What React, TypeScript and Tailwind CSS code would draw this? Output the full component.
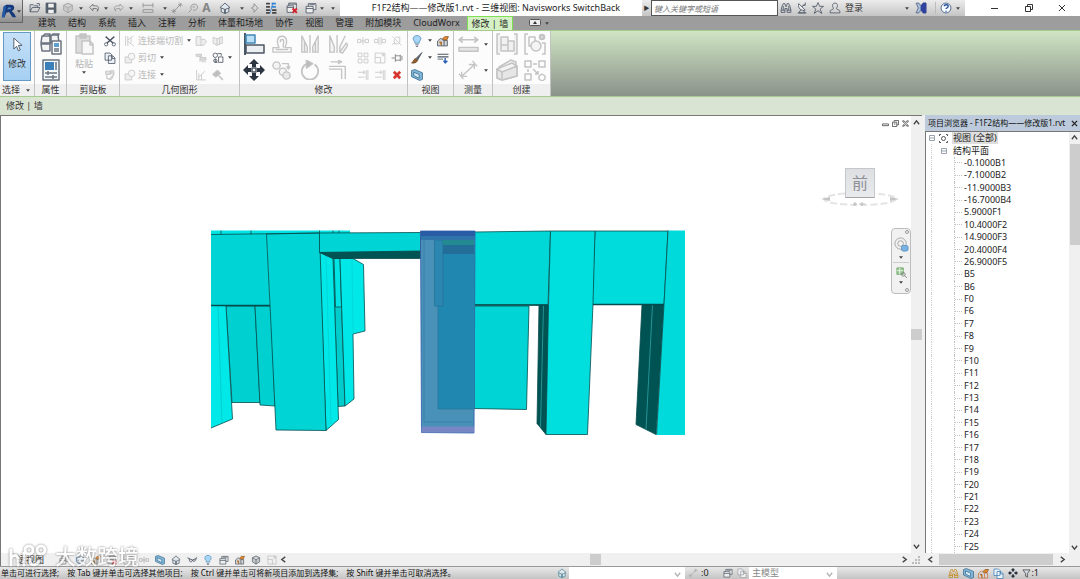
import { useState } from "react";
import type { ReactNode } from "react";

// all glyphs are drawn on a 22x22 grid and take the colour of the button
const icons: Record<string, ReactNode> = {
  open: <path d="M2 18V5h6l2 2h6v3M2 18l4-8h14l-4 8H2zM14 3h5v4" />,
  save: (
    <>
      <path d="M2 2h18v18H2z" fill="#555e6b" />
      <path d="M6 3h10v7H6zM6 14h10v6H6z" fill="#f1f1f1" stroke="none" />
    </>
  ),
  cube: <path d="M11 2l8 4v9l-8 5-8-5V6zM3 6l8 4 8-4M11 10v10" fill="#c9c9c9" />,
  undo: <path d="M9 4L3 10l6 6v-4h6c2 0 3 1 2 5 5-7 1-10-3-10H9z" />,
  redo: <path d="M13 4l6 6-6 6v-4H7c-2 0-3 1-2 5-5-7-1-10 3-10h5z" />,
  glasses: <path d="M1 6l4 2c0 9 6 9 7 3 2 5 7 3 8-3l1-3M5 8l7 3 8-3" strokeWidth="2" />,
  dim: <path d="M2 6h18M2 2v8M20 2v8M2 14h18v5H2z" />,
  diag: <path d="M3 19L19 3M1 15l6 6M15 1l6 6M5 13v4h4M17 9V5h-4" />,
  tag: <path d="M3 19l5-5M8 14C4 6 12 2 17 5s2 11-6 10M10 9h5" />,
  home: (
    <>
      <path d="M2 10l9-8 9 8-9 4zM4 11v7l7 3 7-3v-7" fill="#dfe7ee" />
      <path d="M11 14v7" strokeWidth="3" />
    </>
  ),
  section: <path d="M11 3l7 8-7 8M11 3v5L6 11l5 3v5" />,
  lines: (
    <>
      <path d="M2 3h7M2 9h7M2 15h7M2 20h7M13 20h8M13 15h8" strokeWidth="3" />
      <path d="M12 3h8M12 9h8" stroke="#3485d4" strokeWidth="3" />
      <path d="M15 1L9 21" stroke="#3485d4" />
    </>
  ),
  closeWin: (
    <>
      <path d="M5 7V2h14v12M2 7h12v12H2zM5 4h14M2 10h12" fill="#eee" />
      <path d="M12 12l8 8M20 12l-8 8" stroke="#d5232d" strokeWidth="3.500" />
    </>
  ),
  switchWin: <path d="M2 8h13v12H2zM6 8V3h14v11h-5M2 12h13M8 5h10" fill="#eee" />,
  binoculars: (
    <>
      <path d="M4 7l2-4h3l1 5h2l1-5h3l2 4 2 8v4h-7v-7h-4v7H2v-4z" />
      <path d="M2 15h7M13 15h7M6 7v8M16 7v8" />
    </>
  ),
  dish: (
    <>
      <path d="M5 3c-2 8 4 14 12 12z" fill="#f1f1f1" />
      <path d="M11 9l5-5M17 1v5h-5M9 14l-4 6h12l-4-5M3 20h16" />
    </>
  ),
  star: <path d="M11 1l3 7h7l-6 5 3 8-7-5-7 5 3-8-6-5h7z" />,
  user: <path d="M11 2c5 0 5 5 4 7s-2 4 1 5 4 1 4 6H2c0-5 1-5 4-6s2-3 1-5-1-7 4-7z" />,
  exchange: (
    <>
      <path d="M2 2h5l4 5 4-5h5v18h-5l-4-5-4 5H2l4-9z" fill="#a9bfdc" />
      <path d="M11 8l4-6h5v18h-5l-4-6z" fill="#30429d" stroke="#30429d" />
    </>
  ),
  help: (
    <>
      <circle cx="11" cy="11" r="9" fill="#f7faff" stroke="#35547f" />
      <path d="M8 8c0-4 7-4 7 0 0 3-4 3-4 5M11 16v2" stroke="#2450a0" strokeWidth="2.500" />
    </>
  ),
  props: (
    <>
      <path d="M2 3h8v7H1zM11 2h7l1 8h-8zM1 11h9v7H2z" fill="#f3f3f3" />
      <path d="M3 3l2-2h5l-1 2M12 2l1-1h6l-1 2" />
      <path d="M12 8h9v13h-9z" fill="#fff" />
      <path d="M14 10h5v4h-5z" fill="#5c9fd0" stroke="none" />
      <path d="M14 16h5M14 18h5" />
    </>
  ),
  typeProps: (
    <>
      <path d="M3 1h16v20H3z" fill="#f5f8fb" />
      <path d="M5 3h9v8H5z" fill="#3b80b8" stroke="none" />
      <path d="M16 3v8M5 14h12M8 12v4M5 18h12M13 16v4" />
    </>
  ),
  paste: (
    <>
      <path d="M3 3h14v17H3z" fill="#dcdcdc" />
      <path d="M7 1h6v4H7z" fill="#c4c4c4" />
      <path d="M9 8h8l3 3v10H9zM17 8v4h3" fill="#f8f8f8" />
    </>
  ),
  cut: (
    <>
      <path d="M3 3l14 12M19 3L5 15" strokeWidth="2.500" />
      <circle cx="4" cy="17" r="3" />
      <circle cx="18" cy="17" r="3" />
    </>
  ),
  copy: <path d="M2 2h9l3 3v10H2zM8 7h8l4 4v10H8zM15 7v5h5" fill="#eef3f8" />,
  match: <path d="M3 4h9v6H3zM12 3h6v5h-6zM5 10v8h5l9-10-5 11H8" fill="#ddd" />,
  cope: <path d="M3 2v18M7 2v18M7 9l10-7M7 12l11 8M13 6v8" />,
  cutGeo: (
    <>
      <path d="M2 9h12v11H2z" fill="#eee" />
      <circle cx="14" cy="8" r="6" fill="#f6f6f6" />
    </>
  ),
  joinRoof: <path d="M2 3h9v5h7l3 4-5 7H2zM11 8v11" fill="#eee" />,
  splitFace: <path d="M2 4l7 3v12l-7-4zM9 7l10-4v12L9 19M14 5v12" fill="#eee" />,
  beam: <path d="M2 4h10v4H2zM9 8v10M9 10h11v5H9M12 18h8" fill="#ddd" />,
  paint: (
    <>
      <circle cx="6" cy="6" r="4" />
      <path d="M12 9h8v10h-8zM10 3h7v4M6 12v7h4" />
      <circle cx="6" cy="16" r="3" />
    </>
  ),
  wallJoin: <path d="M3 2v18h17M7 15L18 4M7 8v12M12 11v9" />,
  hammer: <path d="M2 10l8-7 5 5-8 6zM11 11l9 9" fill="#bbb" strokeWidth="3" />,
  align: (
    <>
      <path d="M2 0v22" strokeWidth="2" />
      <path d="M3 2h9v8H3z" fill="#b9def6" stroke="#4186b5" />
      <path d="M3 12h18v8H3z" fill="#eceff2" />
    </>
  ),
  offset: <path d="M1 20h20v-5h-6c-2 0 2-3 1-8-1-6-9-6-10 0-1 5 3 8 1 8H1zM4 17h14M9 9c0-4 4-4 4 0 0 2-2 3 0 6" />,
  mirror: <path d="M11 1v20M2 2l6 12v6H2zM20 2l-6 12v6h6zM5 8v12M17 8v12" fill="#f4f4f4" />,
  mirrorDraw: <path d="M10 1v20M2 2l5 12v6H2zM19 2l-6 12v6M13 20l7-10 2 2-6 9z" fill="#f4f4f4" />,
  move: (
    <>
      <path d="M11 0l5 5h-3v3H9V5H6zM11 22l-5-5h3v-3h4v3h3zM0 11l5-5v3h3v4H5v3zM22 11l-5 5v-3h-3V9h3V6z" fill="#2b3441" stroke="none" />
      <path d="M9 9h4v4H9z" fill="#fff" />
    </>
  ),
  copyObj: (
    <>
      <circle cx="5" cy="6" r="4" fill="#f4f4f4" />
      <circle cx="12" cy="13" r="4" fill="#f4f4f4" />
      <circle cx="16" cy="17" r="4" fill="#eaeaea" />
      <path d="M11 4h7v5M16 7l2 3 2-3" />
    </>
  ),
  rotate: (
    <>
      <path d="M8 4a9 9 0 1 0 8 1" strokeWidth="2" />
      <path d="M7 0l7 4-7 5z" fill="#bbb" />
    </>
  ),
  trim: <path d="M1 7h18v14M1 10h14v11M3 2h11M11 0l4 2-4 2" />,
  split: <path d="M1 8h6v6H1zM15 8h6v6h-6zM11 4v14M7 11h8" />,
  splitGap: <path d="M1 8h6v6H1zM15 8h6v6h-6zM9 4v14M13 4v14" />,
  unpin: <path d="M3 3l16 16M8 4h8v10M6 8v8h8M2 18l4-4" />,
  array: <path d="M2 2h7v7H2zM13 2h7v7h-7zM2 13h7v7H2zM13 13h7v7h-7z" />,
  scale: <path d="M2 2h18v18H2zM2 10h10v10M14 8l4-4M14 4h4v4" />,
  pin: <path d="M1 11h7M8 4v14M8 7h9M8 15h9M17 5v12M20 7v8" />,
  extend: <path d="M2 6h12M2 15h12M17 2v18M11 3l4 3-4 3M20 2v18" />,
  del: <path d="M4 4l14 14M18 4L4 18" stroke="#d6362d" strokeWidth="6" />,
  bulb: (
    <>
      <path d="M11 1c8 0 9 8 4 11v3H7v-3C2 9 3 1 11 1z" fill="#a9d6f5" stroke="#538fbd" />
      <path d="M8 18h6M9 21h4" />
    </>
  ),
  house: (
    <>
      <path d="M1 11l6-5 6 5v9H1zM13 10h6v10h-6" fill="#d4d4d4" />
      <path d="M4 13h4v7M10 7l4-4h7l-3 6h-5z" fill="#e48a2e" stroke="#8a5a2a" />
    </>
  ),
  brush: (
    <>
      <path d="M20 1L9 12l3 3z" fill="#666" />
      <path d="M8 12l4 4c-2 4-7 5-11 4 4-2 3-6 7-8z" fill="#93602d" stroke="#6b4520" />
    </>
  ),
  thin: (
    <>
      <path d="M1 4h20M1 9h20" strokeWidth="2" />
      <path d="M1 13h10" />
      <path d="M15 11v8M12 16l3 4 4-4" stroke="#2b61b5" strokeWidth="2.500" />
    </>
  ),
  box: (
    <>
      <path d="M1 3l6-2 14 6v12l-5 2L1 14z" fill="#7fb6d8" stroke="#3c6c8d" />
      <path d="M5 6l10 4v7L5 12z" fill="#d6ebf8" stroke="#3c6c8d" />
    </>
  ),
  measure: <path d="M1 6h20M5 3L1 6l4 3M17 3l4 3-4 3M1 14h20v4H1z" fill="#e4e4e4" />,
  measureDiag: <path d="M3 19L19 4M1 15l5 6M16 1l5 6M4 13v5h6M18 10V5h-6" />,
  group: <path d="M4 1H1v20h3M18 1h3v20h-3M5 4h7v8H5zM12 8h6v10h-6zM5 12h7v6H5z" fill="#f1f1f1" />,
  similar: (
    <>
      <path d="M4 1H1v20h3M18 10h3v11h-3M5 4h6v9H5z" />
      <circle cx="12" cy="13" r="5" fill="#f4f4f4" />
      <circle cx="18" cy="4" r="2" strokeWidth="2.500" />
    </>
  ),
  parts: (
    <>
      <path d="M3 8L15 1l5 2v9l-5 3z" fill="#f1f1f1" />
      <path d="M1 10l15-6 5 3v10L6 21l-5-2z" fill="#f4f4f4" />
      <path d="M1 10l5 3 15-6v10L6 21l-5-2z" fill="#e6e6e6" />
      <path d="M6 13v8" />
    </>
  ),
  assembly: <path d="M1 2h6v6H1zM15 2h6v6h-6zM1 15h6v6H1zM9 5h4M4 10v3M9 10l5 5M11 15h3v-3M15 17l3-2 3 2v3l-3 2-3-2z" />,
};

type IconProps = { name: string; size?: string; tone?: string };

function Icon({ name, size = "size-3", tone = "text-[#c4c4c4]" }: IconProps) {
  return (
    <svg viewBox="0 0 22 22" className={`${size} ${tone} shrink-0`} fill="none" stroke="currentColor" strokeWidth="1.5" strokeLinejoin="round">
      {icons[name]}
    </svg>
  );
}

function Tool({ name, label, size, tone, className = "" }: IconProps & { label: string; className?: string }) {
  return (
    <button aria-label={label} className={`flex items-center justify-center shrink-0 ${className}`}>
      <Icon name={name} size={size} tone={tone} />
    </button>
  );
}

function Caret({ className = "w-2" }: { className?: string }) {
  return (
    <span className={`flex items-center justify-center shrink-0 ${className}`}>
      <svg viewBox="0 0 6 4" className="w-[4px] h-[3px] text-[#444]">
        <path d="M0 0h6L3 4z" fill="currentColor" />
      </svg>
    </span>
  );
}

function Chevron({ turn = "" }: { turn?: string }) {
  return (
    <svg viewBox="0 0 8 8" className={`size-[7px] ${turn}`} fill="none" stroke="#444" strokeWidth="1.5">
      <path d="M1 6l3-4 3 4" />
    </svg>
  );
}

function Panel({ title, width, children }: { title: ReactNode; width: string; children: ReactNode }) {
  return (
    <section className={`flex flex-col shrink-0 border-r border-[#c3c3c3] ${width}`}>
      <div className="flex-1 bg-[#fcfcfc] flex">{children}</div>
      <h2 className="h-3 bg-[#efefef] flex items-center justify-center gap-1 whitespace-nowrap">{title}</h2>
    </section>
  );
}

const dark = "text-[#4b5563]";

const quick: { name: string; label: string; width: string; tone: string; menu?: boolean }[] = [
  { name: "open", label: "打开", width: "w-4", tone: dark },
  { name: "save", label: "保存", width: "w-4", tone: dark },
  { name: "cube", label: "同步", width: "w-[18px]", tone: "text-[#a0a0a0]", menu: true },
  { name: "undo", label: "放弃", width: "w-[17px]", tone: "text-[#666]", menu: true },
  { name: "redo", label: "重做", width: "w-[17px]", tone: "text-[#999]", menu: true },
  { name: "dim", label: "测量", width: "w-[26px]", tone: "text-[#8c8c8c]", menu: true },
  { name: "diag", label: "对齐标注", width: "w-4", tone: "text-[#8c8c8c]" },
  { name: "tag", label: "标记", width: "w-4", tone: "text-[#8c8c8c]" },
];

const tabs = ["建筑", "结构", "系统", "插入", "注释", "分析", "体量和场地", "协作", "视图", "管理", "附加模块", "CloudWorx"];

function TitleBar() {
  return (
    <div className="flex h-4 bg-linear-to-b from-[#ececec] to-[#c5c5c5]">
      <nav aria-label="快速访问工具栏" className="flex items-center w-[317px] pl-1 shrink-0">
        {quick.map((q) => (
          <span key={q.name} className="flex">
            <Tool name={q.name} label={q.label} tone={q.tone} className={q.width} />
            {q.menu && <Caret />}
          </span>
        ))}
        <button aria-label="文字" className="w-5 text-[12px] leading-4 font-bold text-[#858585]">A</button>
        <Tool name="home" label="三维视图" tone={dark} className="w-[26px]" />
        <Caret />
        <Tool name="section" label="剖面" tone="text-[#888]" className="w-4" />
        <Tool name="lines" label="细线" tone="text-[#444]" className="w-[18px]" />
        <Tool name="closeWin" label="关闭隐藏窗口" tone={dark} className="w-6" />
        <Tool name="switchWin" label="切换窗口" tone={dark} className="w-[14px]" />
        <Caret />
        <Caret className="w-[14px]" />
      </nav>
      <h1 className="flex-1 bg-white text-[9px] leading-4 pl-[10px] text-center whitespace-nowrap text-[#222]">
        F1F2结构——修改版1.rvt - 三维视图: Navisworks SwitchBack
      </h1>
      <span className="flex items-center justify-center w-[9px] text-[6px]">▶</span>
      <input
        aria-label="搜索"
        placeholder="键入关键字或短语"
        className="w-[127px] h-4 bg-white border border-[#555] px-[2px] text-[8px] italic placeholder:text-[#777] outline-none"
      />
      <div className="flex items-center w-[187px] gap-1 pl-[2px] shrink-0">
        <Tool name="binoculars" label="查找" tone={dark} />
        <Tool name="dish" label="通讯中心" tone={dark} />
        <Tool name="star" label="收藏夹" tone={dark} />
        <Tool name="user" label="用户" tone={dark} className="ml-px" />
        <button className="w-[66px] text-left flex items-center justify-between">
          登录 <Caret />
        </button>
        <Tool name="exchange" label="Exchange" tone="text-[#51657f]" />
        <span className="w-px h-3 bg-[#bbb] ml-1" />
        <Tool name="help" label="帮助" />
        <Caret className="w-1" />
      </div>
      <div className="flex justify-between items-center w-[115px] pl-[26px] pr-[14px] bg-white shrink-0 text-[#333]">
        <button aria-label="最小化">
          <svg viewBox="0 0 8 8" className="size-2" stroke="currentColor" fill="none"><path d="M0 4.500h7" /></svg>
        </button>
        <button aria-label="还原">
          <svg viewBox="0 0 8 8" className="size-2" stroke="currentColor" fill="none"><path d="M.5 2.500h5v5h-5zM2.500 2.500v-2h5v5h-2" /></svg>
        </button>
        <button aria-label="关闭">
          <svg viewBox="0 0 8 8" className="size-2" stroke="currentColor" fill="none"><path d="M1 1l6 6M7 1L1 7" /></svg>
        </button>
      </div>
    </div>
  );
}

function Header() {
  return (
    <header className="flex bg-[#9d9d9d] h-[30px] shrink-0">
      <button aria-label="应用程序菜单" className="w-[23px] h-[23px] bg-linear-to-b from-[#d8d8d8] to-[#8f8f8f] border-r border-b border-[#666] flex items-center justify-center shrink-0">
        <svg viewBox="0 0 18 18" className="w-4 h-[18px]">
          <path d="M3 4l3-2h5c5 0 5 6 1 7l3 3 2 4h-4l-4-6-3 1-2 5H1z" fill="#153a7c" />
          <path d="M8 5h2c2 0 1 2 0 2H7z" fill="#5b86c4" />
          <path d="M3 4l3-2-2 14H1z" fill="#2459a5" />
        </svg>
        <Caret className="w-1" />
      </button>
      <div className="flex-1 min-w-0">
        <TitleBar />
        <nav aria-label="功能区" className="flex h-[14px] pl-[9px] whitespace-nowrap text-[#222]">
          {tabs.map((t) => (
            <button key={t} className="px-[6px] leading-[14px]">{t}</button>
          ))}
          <button className="w-[46px] ml-px bg-[#d4f0c4] border-x border-t border-[#7fe054] text-center leading-[13px]">修改 | 墙</button>
          <button aria-label="最小化功能区" className="flex items-center gap-1 ml-4">
            <svg viewBox="0 0 12 8" className="w-3 h-2"><rect x=".5" y=".5" width="11" height="6" rx="1" fill="#eee" stroke="#555" /><path d="M4 5l2-3 2 3z" fill="#333" /></svg>
            <Caret className="w-1" />
          </button>
        </nav>
      </div>
    </header>
  );
}

const small = "h-[17px] w-[17px]";
const big = "h-[26px] w-7";

function Ribbon() {
  return (
    <div className="flex h-[67px] shrink-0 border-y border-[#a5cb8e] bg-linear-to-b from-[#cfe5c3] to-[#8b938a]">
      <Panel title={<>选择 <Caret /></>} width="w-[35px]">
        <button className="mx-[3px] mt-px mb-[3px] flex-1 flex flex-col items-center gap-[6px] pt-1 bg-linear-to-b from-[#c6e1f8] to-[#a5cff2] border border-[#6699c4]">
          <svg viewBox="0 0 12 16" className="w-[11px] h-[15px]"><path d="M2 1v12l3-3 2 5 2-1-2-5h4z" fill="#fff" stroke="#4b5563" /></svg>
          修改
        </button>
      </Panel>
      <Panel title="属性" width="w-8">
        <div className="flex-1 flex flex-col items-center">
          <Tool name="props" label="属性" size="size-[22px]" tone="text-[#6b7480]" className={big} />
          <Tool name="typeProps" label="类型属性" size="size-[22px]" tone="text-[#6b7480]" className={big} />
        </div>
      </Panel>
      <Panel title="剪贴板" width="w-[53px]">
        <button className="w-[34px] pt-[2px] flex flex-col items-center text-[#b4b4b4]">
          <Icon name="paste" size="size-[22px]" />
          <span className="mt-[3px]">粘贴</span>
          <Caret className="h-1" />
        </button>
        <div className="flex flex-col pt-px">
          <Tool name="cut" label="剪切" tone={dark} className={small} />
          <Tool name="copy" label="复制" tone={dark} className={small} />
          <Tool name="match" label="匹配类型" className={small} />
        </div>
      </Panel>
      <Panel title="几何图形" width="w-[120px]">
        <div className="flex flex-col w-[72px] pl-1 pt-px text-[#b8b8b8]">
          {[["cope", "连接端切割"], ["cutGeo", "剪切"], ["cutGeo", "连接"]].map(([icon, text]) => (
            <button key={text} className="flex items-center h-[17px] gap-[2px] whitespace-nowrap">
              <Icon name={icon} /> {text} <Caret />
            </button>
          ))}
        </div>
        <div className="grid grid-cols-[17px_17px] content-start pt-px">
          <Tool name="joinRoof" label="连接屋顶" className={small} />
          <Tool name="splitFace" label="拆分面" className={small} />
          <Tool name="beam" label="梁连接" className={small} />
          <Tool name="paint" label="填色" tone={dark} className={small} />
          <Tool name="wallJoin" label="墙连接" className={small} />
          <Tool name="hammer" label="拆除" className={small} />
        </div>
        <Caret className="w-2 h-[52px]" />
      </Panel>
      <Panel title="修改" width="w-[168px]">
        <div className="grid grid-cols-[28px_28px_28px_28px] content-start">
          <Tool name="align" label="对齐" size="size-[22px]" tone={dark} className={big} />
          <Tool name="offset" label="偏移" size="size-5" className={big} />
          <Tool name="mirror" label="镜像 - 拾取轴" size="size-5" className={big} />
          <Tool name="mirrorDraw" label="镜像 - 绘制轴" size="size-5" className={big} />
          <Tool name="move" label="移动" size="size-[22px]" tone={dark} className={big} />
          <Tool name="copyObj" label="复制图元" size="size-5" className={big} />
          <Tool name="rotate" label="旋转" size="size-5" className={big} />
          <Tool name="trim" label="修剪" size="size-5" className={big} />
        </div>
        <div className="grid grid-cols-[17px_17px_17px] content-start pt-px pl-[2px]">
          <Tool name="split" label="拆分图元" className={small} />
          <Tool name="splitGap" label="用间隙拆分" className={small} />
          <Tool name="unpin" label="解锁" className={small} />
          <Tool name="array" label="阵列" className={small} />
          <Tool name="scale" label="缩放" className={small} />
          <Tool name="pin" label="锁定" tone="text-[#777]" className={small} />
          <Tool name="extend" label="修剪单个" className={small} />
          <Tool name="extend" label="修剪多个" className={small} />
          <Tool name="del" label="删除" size="size-[10px]" className={small} />
        </div>
      </Panel>
      <Panel title="视图" width="w-[46px]">
        <div className="grid grid-cols-[18px_8px_17px] content-start pt-px">
          <Tool name="bulb" label="隐藏" tone={dark} className={small} />
          <Caret />
          <Tool name="house" label="置换" tone={dark} className={small} />
          <Tool name="brush" label="替换" tone={dark} className={small} />
          <Caret />
          <Tool name="thin" label="线处理" tone={dark} className={small} />
          <Tool name="box" label="选择框" className={small} />
        </div>
      </Panel>
      <Panel title="测量" width="w-[39px]">
        <div className="grid grid-cols-[28px_8px] content-start">
          <Tool name="measure" label="测量距离" size="size-[21px]" className={big} />
          <Caret />
          <Tool name="measureDiag" label="对齐尺寸标注" size="size-5" className={big} />
          <Caret />
        </div>
      </Panel>
      <Panel title="创建" width="w-[58px]">
        <div className="grid grid-cols-[28px_28px] content-start">
          <Tool name="group" label="创建组" size="size-[22px]" className={big} />
          <Tool name="similar" label="创建类似" size="size-[22px]" className={big} />
          <Tool name="parts" label="创建部件" size="size-[22px]" className={big} />
          <Tool name="assembly" label="创建部件集" size="size-[22px]" className={big} />
        </div>
      </Panel>
    </div>
  );
}

function Building() {
  return (
    <svg viewBox="208 228 480 210" className="w-[480px] h-[210px]" stroke="#064c4e" strokeWidth=".8">
      {/* left block */}
      <path d="M211 230.500h139v4H211z" fill="#00e4e4" stroke="none" />
      <path d="M226 306h29l5 96.500h-28z" fill="#00d0d0" />
      <path d="M255 306h16l4 100-15-1z" fill="#00d0d0" />
      <path d="M211 306h15l6.500 113-21.500 9z" fill="#00e8e8" stroke="none" />
      <path d="M226 306l6.500 113-21.500 9" fill="none" />
      <path d="M218 306l4 117" stroke="#00c6c8" />
      <path d="M211 234h56l3 71h-59z" fill="#00d4d4" stroke="none" />
      <path d="M211 305.500h59" strokeWidth="1.500" />
      <path d="M333 258.500h7l5 147.500-7 .5z" fill="#00cccc" />
      <path d="M334 258.500h6l1.500 48.500h-6z" fill="#00e4e4" />
      <path d="M340 258.500h13l10.500 6L365 331l-12 3 1 65-9 7z" fill="#00e8e8" />
      <path d="M352 259l1 75" stroke="#00d6d8" />
      <path d="M319.500 252l13.500 6.500 5.500 161-12.500 11z" fill="#00e8e8" />
      <path d="M326 256l5 168" stroke="#00d2d4" />
      <path d="M266.500 234l53-1L326 430.500 276 430l-6-125z" fill="#00d4d4" />
      <path d="M211 234.500l109-1.500M221 230.500v4M251 230.500v4M319.500 230.500v3M333 230.500v3M339 230.500v3" />
      <path d="M319.500 233l101-.5v19.500l-101 .5z" fill="#00d4d4" />
      <path d="M319.500 252.500l101-1.500v7.500H333z" fill="#005353" />
      {/* right block */}
      <path d="M474 306h55l-2.500 103.500-52.500-1z" fill="#00d4d4" />
      <path d="M539 305h10l-3 129.500-9-11z" fill="#005353" />
      <path d="M543.500 305l-3 122" stroke="#2fa3a4" />
      <path d="M642 305h22l-8 129.500-20-10z" fill="#005353" />
      <path d="M652.500 305L646 429" stroke="#2fa3a4" />
      <path d="M474 232l76.500-1-2.500 74h-74z" fill="#00d8d8" />
      <path d="M595 231h73l-4 73.500h-72z" fill="#00dcdc" />
      <path d="M474 305h74M592 304.500h72" strokeWidth="1.500" />
      <path d="M550.500 231H595l-2 73-5.500 130.500H546l2.500-130z" fill="#00dede" />
      <path d="M668 230.500h17V435h-28.500l7.500-131z" fill="#00dada" stroke="none" />
      <path d="M668 230.500l-4 74-7.500 130" fill="none" />
      {/* selected wall */}
      <path d="M420.500 231H475l-1 202-52.500-.5z" fill="#4a91b8" stroke="#3159a8" />
      <path d="M438 245h36.500v164H438z" fill="#2088b0" stroke="#27799f" />
      <path d="M434.500 240h8.500v66h-8.500z" fill="#2b86b0" stroke="#27729a" />
      <path d="M443 240h31v5h-31z" fill="#248a91" stroke="none" />
      <path d="M443 245h31v9h-31z" fill="#236e98" stroke="none" />
      <path d="M421 231h54v5h-54z" fill="#285ca4" stroke="none" />
      <path d="M421 236h54v4h-54z" fill="#2f74ab" stroke="none" />
      <path d="M421.500 426.500H474v6h-52.500z" fill="#7787c6" stroke="none" />
      <path d="M424 238v184h48" stroke="#367da8" fill="none" />
    </svg>
  );
}

function Canvas() {
  return (
    <div className="relative flex-1 min-w-0 min-h-0 overflow-hidden bg-white">
      <div className="pt-[112px] pl-[207px]">
        <Building />
      </div>
      <div className="absolute right-[2px] top-1 flex gap-[3px] text-[#555]">
        <button aria-label="最小化视图"><svg viewBox="0 0 8 8" className="size-[7px]" fill="none" stroke="currentColor"><path d="M.5 4.500h7v2h-7z" /></svg></button>
        <button aria-label="还原视图"><svg viewBox="0 0 8 8" className="size-[7px]" fill="none" stroke="currentColor"><path d="M.5 2.500h5v5h-5zM2.500 2v-1.500h5v5h-2M2 4.500h2" /></svg></button>
        <button aria-label="关闭视图"><svg viewBox="0 0 8 8" className="size-[7px]" fill="none" stroke="currentColor"><path d="M.5 1h2L4 3l1.500-2h2L5 4l2.500 3h-2L4 5 2.500 7h-2L3 4z" /></svg></button>
      </div>
      <div className="absolute right-[11px] top-[52px] w-20 flex flex-col items-center">
        <svg viewBox="0 0 80 18" className="absolute top-[22px] w-20 h-[18px]" fill="none" stroke="#b9b9b9">
          <ellipse cx="40" cy="9" rx="36" ry="6" strokeWidth="2" strokeDasharray="7 3" stroke="#e4e4e4" />
          <path d="M1 9l9-2v4zM79 9l-9-2v4z" fill="#c4c4c4" stroke="none" />
          <path d="M33 14h4M35 12v4M39 14h6M42 12v4" />
        </svg>
        <button className="relative size-[30px] bg-linear-to-b from-[#dedfe2] to-[#e9eaec] border border-[#c6c7ca] border-b-[#a5a5a5] text-[16px] leading-7 text-[#8d9096]">前</button>
      </div>
      <div className="absolute right-0 top-[112px] w-5 h-[66px] rounded-sm border border-[#bdbdbd] bg-[#f1f1f1] flex flex-col items-center justify-between py-px">
        <span className="self-end size-1 mr-px rounded-full border border-[#999]" />
        <button aria-label="控制盘">
          <svg viewBox="0 0 16 16" className="size-[15px]" fill="none" stroke="#a3a3a3">
            <circle cx="7" cy="7" r="6" /><circle cx="7" cy="7" r="3" />
            <rect x="8" y="9" width="7" height="6" rx="2" fill="#79b2e2" stroke="#5d94c4" />
          </svg>
        </button>
        <Caret className="h-1" />
        <span className="w-4 h-px bg-[#ccc]" />
        <button aria-label="缩放">
          <svg viewBox="0 0 12 12" className="size-[11px]" fill="none" stroke="#888">
            <path d="M1 1h7v7H1z" fill="#9ac894" stroke="#74a96e" /><path d="M1 4h7M4 1v7" stroke="#e8f4e6" />
            <circle cx="8" cy="8" r="2" /><path d="M9 9l3 3" />
          </svg>
        </button>
        <Caret className="h-1" />
        <span className="self-end size-1 mr-px rounded-full border border-[#999]" />
      </div>
    </div>
  );
}

const viewTools: [string, string, string][] = [
  ["switchWin", "比例", "text-[#777]"],
  ["cube", "详细程度", "text-[#3c79b5]"],
  ["house", "视觉样式", "text-[#777]"],
  ["closeWin", "日光路径", "text-[#777]"],
  ["scale", "阴影", "text-[#aaa]"],
  ["split", "渲染", "text-[#aaa]"],
  ["box", "裁剪视图", "text-[#3c79b5]"],
  ["home", "锁定三维视图", dark],
  ["glasses", "临时隐藏", dark],
  ["bulb", "显示隐藏图元", dark],
  ["switchWin", "临时视图属性", dark],
  ["house", "分析模型", dark],
  ["cube", "位移集", dark],
  ["scale", "约束", "text-[#bbb]"],
];

function ViewBar() {
  return (
    <div className="flex h-[13px] items-center bg-[#f0f0f0] shrink-0">
      <button className="pl-4 w-[55px] text-left text-[#222] shrink-0 whitespace-nowrap">透视图</button>
      {viewTools.map(([icon, label, tone]) => (
        <Tool key={label} name={icon} label={label} tone={tone} size="size-[10px]" className="w-4" />
      ))}
      <button aria-label="向左滚动" className="w-[10px] shrink-0"><Chevron turn="-rotate-90" /></button>
      <div className="flex-1 h-[11px] flex justify-center">
        <span className="w-[11px] bg-[#cdcdcd]" />
      </div>
      <button aria-label="向右滚动"><Chevron turn="rotate-90" /></button>
      <svg viewBox="0 0 8 8" className="size-2 ml-1 mr-[2px]" fill="#bbb"><path d="M6 0h2v2H6zM3 3h2v2H3zM6 3h2v2H6zM0 6h2v2H0zM3 6h2v2H3zM6 6h2v2H6z" /></svg>
    </div>
  );
}

const levels = [
  "-0.1000B1", "-7.1000B2", "-11.9000B3", "-16.7000B4", "5.9000F1", "10.4000F2", "14.9000F3", "20.4000F4", "26.9000F5",
  "B5", "B6", "F0", "F6", "F7", "F8", "F9", "F10", "F11", "F12", "F13", "F14", "F15", "F16", "F17", "F18", "F19",
  "F20", "F21", "F22", "F23", "F24", "F25",
];

function Toggle({ open, onClick, label }: { open: boolean; onClick: () => void; label: string }) {
  return (
    <button aria-label={label} aria-expanded={open} onClick={onClick} className="flex items-center">
      <svg viewBox="0 0 6 6" className="size-[6px]" fill="#fff" stroke="#9aa3ad">
        <path d={open ? "M.5.5h5v5h-5zM1 3h4" : "M.5.5h5v5h-5zM1 3h4M3 1v4"} />
      </svg>
    </button>
  );
}

function Browser() {
  const [open, setOpen] = useState(true);
  return (
    <aside className="flex flex-col w-[155px] shrink-0 bg-white">
      <div className="flex items-center justify-between h-4 pl-[3px] pr-[2px] bg-[#bccadb] text-[8px] whitespace-nowrap text-[#111]">
        <h2>项目浏览器 - F1F2结构——修改版1.rvt</h2>
        <button aria-label="关闭浏览器">
          <svg viewBox="0 0 8 8" className="size-[7px]" stroke="#222" strokeWidth="1.5"><path d="M1 1l6 6M7 1L1 7" /></svg>
        </button>
      </div>
      <div className="flex flex-1 min-h-0 border-l border-t border-[#777]">
        <ul className="flex-1 min-w-0 flex flex-col overflow-hidden pl-[3px] text-[#222]">
          <li className="flex-1 min-h-0 flex items-center gap-1">
            <Toggle open={open} onClick={() => setOpen(!open)} label="视图" />
            <svg viewBox="0 0 9 9" className="size-[9px]" fill="none" stroke="#555"><path d="M2 .5H.5V2M7 .5h1.500V2M2 8.500H.5V7M7 8.500h1.500V7" /><circle cx="4.500" cy="4.500" r="2" /></svg>
            <span className="bg-[#dedede] px-px leading-3">视图 (全部)</span>
          </li>
          <li className="flex-1 min-h-0 flex items-center gap-[6px] ml-[2px] pl-[9px] border-l border-dotted border-[#d0d0d0]">
            <Toggle open={open} onClick={() => setOpen(!open)} label="结构平面" />
            结构平面
          </li>
          {open && levels.map((level) => (
            <li key={level} className="flex-1 min-h-0 flex ml-[2px] pl-[11px] border-l border-dotted border-[#d0d0d0]">
              <span className="flex items-center ml-[11px] border-l border-dotted border-[#c4c4c4] gap-[2px]">
                <span className="w-[7px] border-t border-dotted border-[#c4c4c4]" />
                {level}
              </span>
            </li>
          ))}
        </ul>
        <div className="w-[11px] bg-[#f0f0f0] flex flex-col items-center py-[2px]">
          <Chevron />
          <span className="w-[10px] h-[101px] mt-[3px] mb-auto bg-[#cdcdcd]" />
          <Chevron turn="rotate-180" />
        </div>
      </div>
      <div className="flex items-center h-[13px] px-[2px] bg-[#f0f0f0]">
        <Chevron turn="-rotate-90" />
        <span className="h-[11px] w-[114px] ml-[5px] mr-auto bg-[#cdcdcd]" />
        <Chevron turn="rotate-90" />
        <span className="w-3" />
      </div>
    </aside>
  );
}

const hints = [
  "单击可进行选择;",
  "按 Tab 键并单击可选择其他项目;",
  "按 Ctrl 键并单击可将新项目添加到选择集;",
  "按 Shift 键并单击可取消选择。",
];

function StatusBar() {
  return (
    <footer className="flex items-center h-[13px] shrink-0 bg-linear-to-b from-[#e8e8e8] to-[#c4c4c4] border-t border-[#999] text-[#222]">
      <p className="w-[555px] pl-px flex gap-2 text-[8px] text-[#111] whitespace-nowrap">
        {hints.map((h) => <span key={h}>{h}</span>)}
      </p>
      <Tool name="home" label="工作集" tone="text-[#3b7a8d]" size="size-[10px]" className="w-[14px]" />
      <span className="relative flex">
        <select aria-label="活动工作集" className="appearance-none w-[116px] h-3 bg-white text-[9px] leading-3 px-[2px] outline-none" defaultValue="">
          <option value="" />
        </select>
        <span className="absolute right-1 top-1 pointer-events-none opacity-40"><Chevron turn="rotate-180" /></span>
      </span>
      <Tool name="diag" label="可编辑" tone="text-[#aaa]" size="size-[10px]" className="w-4" />
      <span className="w-[20px]">:0</span>
      <Tool name="switchWin" label="设计选项" tone={dark} size="size-[10px]" className="w-[14px]" />
      <Tool name="copy" label="排除选项" tone="text-[#999]" size="size-[10px]" className="w-[14px]" />
      <span className="relative flex">
        <select aria-label="设计选项" className="appearance-none w-[88px] h-3 bg-white text-[9px] leading-3 text-[#888] px-[3px] outline-none">
          <option>主模型</option>
        </select>
        <span className="absolute right-1 top-1 pointer-events-none opacity-40"><Chevron turn="rotate-180" /></span>
      </span>
      <div className="flex ml-auto mr-[41px] gap-1 items-center">
        <Tool name="binoculars" label="选择链接" tone="text-[#c48a1c]" size="size-[11px]" />
        <Tool name="box" label="选择基线图元" size="size-[11px]" />
        <Tool name="house" label="选择锁定图元" tone="text-[#c9733a]" size="size-[11px]" />
        <Tool name="copy" label="按面选择" tone="text-[#3b7fb5]" size="size-[11px]" />
        <Tool name="move" label="选择时拖曳" size="size-[10px]" />
        <button className="flex items-center" aria-label="过滤器">
          <svg viewBox="0 0 10 10" className="size-[9px]" fill="#d5dde6" stroke="#555"><path d="M1 1h8L6 5v4l-2-1V5z" /></svg>:1
        </button>
      </div>
    </footer>
  );
}

function Watermark() {
  return (
    <div className="absolute left-2 bottom-[11px] flex items-center gap-[7px] pointer-events-none opacity-80 drop-shadow-[0_0_1px_#666]">
      <svg viewBox="0 0 40 24" className="w-10 h-6" fill="none" stroke="#fff" strokeWidth="3" strokeLinecap="round">
        <path d="M3 6v15M3 15c0-4 7-5 7 0v6M16 21V9" />
        <circle cx="21" cy="6" r="4" /><circle cx="33" cy="6" r="4" /><path d="M22 15v2c0 5 7 5 9 0" />
      </svg>
      <span className="text-[21px] leading-5 font-medium text-white whitespace-nowrap">大数跨境</span>
    </div>
  );
}

export default function App() {
  return (
    <main className="relative h-screen w-full flex flex-col overflow-hidden bg-[#f0f0f0] text-[9px] leading-3 text-[#333] font-['Noto_Sans','Noto_Sans_CJK_SC',sans-serif]">
      <Header />
      <Ribbon />
      <div className="h-[18px] shrink-0 flex items-center pl-[6px] bg-[#dae4d3]">修改 | 墙</div>
      <div className="flex-1 min-h-0 flex">
        <div className="flex-1 min-w-0 flex flex-col border-l border-t border-[#777] mr-[3px]">
          <div className="flex-1 min-h-0 flex">
            <Canvas />
            <div className="w-[11px] bg-[#f0f0f0] flex flex-col items-center justify-between py-[3px]">
              <Chevron />
              <span className="w-[11px] h-[11px] bg-[#cdcdcd]" />
              <Chevron turn="rotate-180" />
            </div>
          </div>
          <ViewBar />
        </div>
        <Browser />
      </div>
      <StatusBar />
      <Watermark />
    </main>
  );
}
